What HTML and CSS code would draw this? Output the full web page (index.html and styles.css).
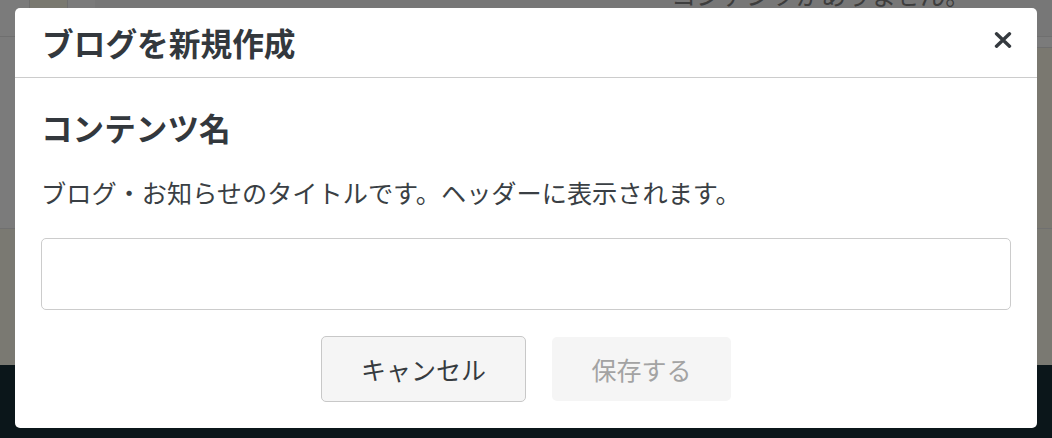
FILE: index.html
```html
<!DOCTYPE html>
<html lang="ja">
<head>
<meta charset="utf-8">
<title>ブログを新規作成</title>
<link rel="stylesheet" href="styles.css">
</head>
<body>
<div class="backdrop">
  <div class="bg-top">
    <div class="bg-cell bg-cell-a"></div>
    <div class="bg-cell bg-cell-b"></div>
    <div class="bg-cell bg-cell-c"></div>
    <div class="bg-cell bg-cell-rest">
      <p class="bg-empty">コンテンツがありません。</p>
    </div>
  </div>
  <div class="bg-main">
    <div class="bg-upper">
      <div class="bg-upper-fill"></div>
      <div class="bg-upper-side"></div>
    </div>
    <div class="bg-lower"></div>
  </div>
  <div class="bg-foot"></div>
</div>

<div class="modal" role="dialog" aria-labelledby="modal-title">
  <div class="modal-header">
    <h1 class="modal-title" id="modal-title">ブログを新規作成</h1>
    <button class="modal-close" aria-label="閉じる">
      <svg width="18" height="16" viewBox="0 0 18 16" aria-hidden="true">
        <path d="M2.5 1.8 L15.5 14.2 M15.5 1.8 L2.5 14.2" stroke="#353a3f" stroke-width="3.4" stroke-linecap="round" fill="none"/>
      </svg>
    </button>
  </div>
  <div class="modal-body">
    <h2 class="field-label">コンテンツ名</h2>
    <p class="field-help">ブログ・お知らせのタイトルです。ヘッダーに表示されます。</p>
    <input class="field-input" type="text" aria-label="コンテンツ名">
    <div class="modal-actions">
      <button class="btn btn-cancel">キャンセル</button>
      <button class="btn btn-save" disabled>保存する</button>
    </div>
  </div>
</div>
</body>
</html>
```

FILE: styles.css
```css
* {
  box-sizing: border-box;
}

html, body {
  margin: 0;
  padding: 0;
}

body {
  width: 1052px;
  height: 438px;
  overflow: hidden;
  position: relative;
  font-family: "Noto Sans CJK JP", "Noto Sans", sans-serif;
  color: #363b40;
  background: #7b7b7b;
}

/* ---------- dimmed page behind the dialog ---------- */
.backdrop {
  display: flex;
  flex-direction: column;
  height: 438px;
}

.bg-top {
  display: flex;
  height: 37px;
  border-bottom: 1px solid #6f6f6f;
}

.bg-cell {
  height: 100%;
}

.bg-cell-a {
  width: 30px;
  background: #7b7b7b;
  border-right: 1px solid #6e6e6e;
}

.bg-cell-b {
  width: 38px;
  background: #7a7970;
  border-right: 1px solid #6e6e6e;
}

.bg-cell-c {
  width: 27px;
  background: #7b7b7b;
}

.bg-cell-rest {
  flex: 1;
  background: #777777;
  padding-left: 576px;
}

.bg-empty {
  margin: -24px 0 0;
  font-size: 25px;
  line-height: 36px;
  color: #3d3d3d;
  white-space: nowrap;
}

.bg-main {
  display: flex;
  flex-direction: column;
  height: 328px;
}

.bg-upper {
  display: flex;
  height: 192px;
  border-bottom: 1px solid #707070;
}

.bg-upper-fill {
  flex: 1;
  background: #7b7b7b;
}

.bg-upper-side {
  width: 16px;
  background: linear-gradient(#7b7b7b 0, #7b7b7b 10px, #6e6e6e 10px, #6e6e6e 11px, #7a7870 11px);
}

.bg-lower {
  flex: 1;
  background: #7a7972;
}

.bg-foot {
  flex: 1;
  background: #0b161a;
}

/* ---------- dialog ---------- */
.modal {
  position: absolute;
  left: 15px;
  top: 8px;
  width: 1022px;
  height: 420px;
  background: #ffffff;
  border-radius: 5px;
  display: flex;
  flex-direction: column;
}

.modal-header {
  display: flex;
  align-items: center;
  justify-content: space-between;
  height: 71px;
  padding: 0 24px 0 27px;
  border-bottom: 1px solid #cccccc;
}

.modal-title {
  margin: 0;
  font-size: 31.7px;
  font-weight: 700;
  line-height: 40px;
  color: #33383d;
  padding-bottom: 2px;
}

.modal-close {
  display: flex;
  align-items: center;
  justify-content: center;
  width: 20px;
  height: 20px;
  padding: 0;
  margin-bottom: 6px;
  border: 0;
  background: transparent;
}

.modal-body {
  display: flex;
  flex-direction: column;
  padding: 26px 27px 26px 26px;
}

.field-label {
  margin: 0;
  font-size: 31.6px;
  font-weight: 700;
  line-height: 46px;
  color: #33383d;
}

.field-help {
  margin: 24px 0 0;
  font-size: 25.2px;
  line-height: 36px;
  color: #3a3f44;
}

.field-input {
  margin-top: 28px;
  width: 970px;
  height: 72px;
  border: 1px solid #cccccc;
  border-radius: 5px;
  background: #ffffff;
  font: inherit;
}

.modal-actions {
  display: flex;
  justify-content: center;
  gap: 26px;
  margin-top: 26px;
  padding-left: 1px;
}

.btn {
  height: 66px;
  font-family: "Noto Sans CJK JP", "Noto Sans", sans-serif;
  font-size: 25px;
  border-radius: 5px;
  background: #f5f5f5;
}

.btn-cancel {
  width: 205px;
  border: 1px solid #c8c8c8;
  color: #363b40;
}

.btn-save {
  width: 179px;
  height: 64px;
  margin-top: 1px;
  border: 0;
  color: #a3a3a3;
}
```
